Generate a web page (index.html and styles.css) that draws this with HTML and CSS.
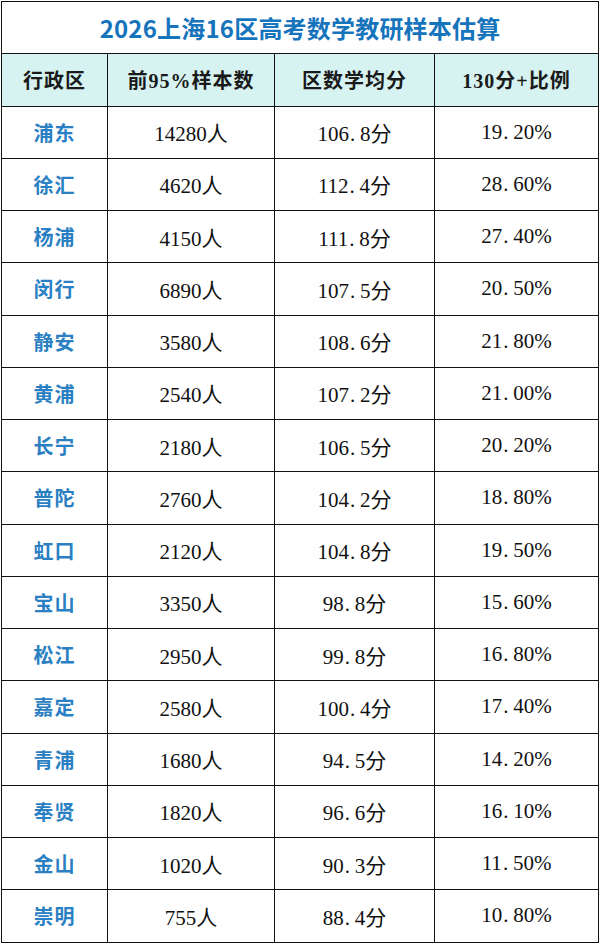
FILE: index.html
```html
<!DOCTYPE html>
<html lang="zh-CN">
<head>
<meta charset="utf-8">
<title>2026上海16区高考数学教研样本估算</title>
<link rel="stylesheet" href="styles.css">
</head>
<body>
<table class="sheet">
  <colgroup>
    <col class="c1"><col class="c2"><col class="c3"><col class="c4">
  </colgroup>
  <tr class="title-row"><td colspan="4" class="title">2026上海16区高考数学教研样本估算</td></tr>
  <tr class="head-row">
    <th>行政区</th><th>前95%样本数</th><th>区数学均分</th><th>130分+比例</th>
  </tr>
  <tr><td class="name">浦东</td><td class="num">14280人</td><td class="num">106<span class="pt">.</span>8分</td><td class="num">19<span class="pt">.</span>20%</td></tr>
  <tr><td class="name">徐汇</td><td class="num">4620人</td><td class="num">112<span class="pt">.</span>4分</td><td class="num">28<span class="pt">.</span>60%</td></tr>
  <tr><td class="name">杨浦</td><td class="num">4150人</td><td class="num">111<span class="pt">.</span>8分</td><td class="num">27<span class="pt">.</span>40%</td></tr>
  <tr><td class="name">闵行</td><td class="num">6890人</td><td class="num">107<span class="pt">.</span>5分</td><td class="num">20<span class="pt">.</span>50%</td></tr>
  <tr><td class="name">静安</td><td class="num">3580人</td><td class="num">108<span class="pt">.</span>6分</td><td class="num">21<span class="pt">.</span>80%</td></tr>
  <tr><td class="name">黄浦</td><td class="num">2540人</td><td class="num">107<span class="pt">.</span>2分</td><td class="num">21<span class="pt">.</span>00%</td></tr>
  <tr><td class="name">长宁</td><td class="num">2180人</td><td class="num">106<span class="pt">.</span>5分</td><td class="num">20<span class="pt">.</span>20%</td></tr>
  <tr><td class="name">普陀</td><td class="num">2760人</td><td class="num">104<span class="pt">.</span>2分</td><td class="num">18<span class="pt">.</span>80%</td></tr>
  <tr><td class="name">虹口</td><td class="num">2120人</td><td class="num">104<span class="pt">.</span>8分</td><td class="num">19<span class="pt">.</span>50%</td></tr>
  <tr><td class="name">宝山</td><td class="num">3350人</td><td class="num">98<span class="pt">.</span>8分</td><td class="num">15<span class="pt">.</span>60%</td></tr>
  <tr><td class="name">松江</td><td class="num">2950人</td><td class="num">99<span class="pt">.</span>8分</td><td class="num">16<span class="pt">.</span>80%</td></tr>
  <tr><td class="name">嘉定</td><td class="num">2580人</td><td class="num">100<span class="pt">.</span>4分</td><td class="num">17<span class="pt">.</span>40%</td></tr>
  <tr><td class="name">青浦</td><td class="num">1680人</td><td class="num">94<span class="pt">.</span>5分</td><td class="num">14<span class="pt">.</span>20%</td></tr>
  <tr><td class="name">奉贤</td><td class="num">1820人</td><td class="num">96<span class="pt">.</span>6分</td><td class="num">16<span class="pt">.</span>10%</td></tr>
  <tr><td class="name">金山</td><td class="num">1020人</td><td class="num">90<span class="pt">.</span>3分</td><td class="num">11<span class="pt">.</span>50%</td></tr>
  <tr><td class="name">崇明</td><td class="num">755人</td><td class="num">88<span class="pt">.</span>4分</td><td class="num">10<span class="pt">.</span>80%</td></tr>
</table>
</body>
</html>
```
FILE: styles.css
```css
html, body {
  margin: 0;
  padding: 0;
  background: #ffffff;
}
body {
  padding: 1px 0 0 1px;
}
.sheet {
  border-collapse: collapse;
  table-layout: fixed;
  width: 597px;
}
.c1 { width: 106px; }
.c2 { width: 167px; }
.c3 { width: 160px; }
.c4 { width: 164px; }
.sheet td, .sheet th {
  border: 1px solid #111111;
  padding: 0;
  text-align: center;
  vertical-align: middle;
}
.title-row { height: 53px; }
.title {
  font-family: "Noto Sans CJK SC", "Liberation Sans", sans-serif;
  font-weight: 700;
  font-size: 24px;
  color: #1674bd;
  letter-spacing: 0.2px;
}
.head-row { height: 53px; }
.head-row th {
  background: #d6f3f2;
  font-family: "Liberation Serif", "Noto Sans CJK SC", serif;
  font-weight: 700;
  font-size: 20px;
  color: #1a1a1a;
  letter-spacing: 1px;
}
.sheet tr { height: 52.25px; }
.name {
  font-family: "Noto Sans CJK SC", sans-serif;
  font-weight: 700;
  font-size: 20px;
  color: #2a80c2;
  letter-spacing: 1px;
}
.num {
  font-family: "Liberation Serif", "Noto Sans CJK SC", serif;
  font-size: 21px;
  color: #111111;
}
.pt {
  display: inline-block;
  width: 10px;
  text-align: left;
  padding-left: 1px;
}
```
